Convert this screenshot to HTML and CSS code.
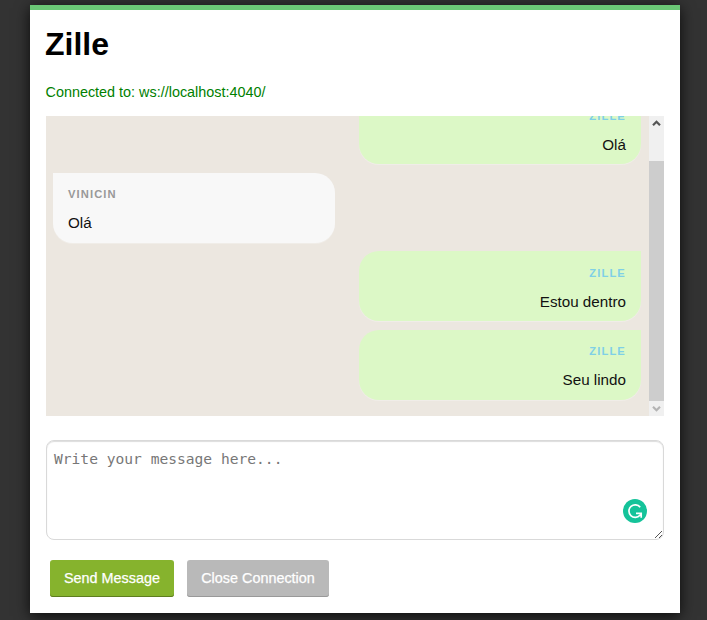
FILE: index.html
```html
<!DOCTYPE html>
<html lang="pt">
<head>
<meta charset="utf-8">
<title>Zille</title>
<link rel="stylesheet" href="styles.css">
</head>
<body>
<main class="page">
  <h1 class="title">Zille</h1>
  <p class="status">Connected to: ws://localhost:4040/</p>
  <section class="chat">
    <ul class="messages">
      <li class="message sent"><span class="author">Zille</span><span class="text">Olá</span></li>
      <li class="message received"><span class="author">Vinicin</span><span class="text">Olá</span></li>
      <li class="message sent"><span class="author">Zille</span><span class="text">Estou dentro</span></li>
      <li class="message sent"><span class="author">Zille</span><span class="text">Seu lindo</span></li>
    </ul>
    <div class="scrollbar">
      <svg class="arrow" width="15" height="15" viewBox="0 0 15 15"><path d="M4 9.2 7.5 5.7 11 9.2" fill="none" stroke="#555" stroke-width="2.2"/></svg>
      <div class="thumb"></div>
      <svg class="arrow" width="15" height="15" viewBox="0 0 15 15"><path d="M4 5.8 7.5 9.3 11 5.8" fill="none" stroke="#b4b4b4" stroke-width="2.2"/></svg>
    </div>
  </section>
  <div class="field">
    <textarea class="input" placeholder="Write your message here..."></textarea>
    <svg class="badge" width="24" height="24" viewBox="0 0 24 24">
      <circle cx="12" cy="12" r="12" fill="#15c39a"/>
      <path d="M17.2 8.2A6.3 6.3 0 1 0 17 16.2L18.2 14.4M13 14.3H18.2V18.8" fill="none" stroke="#fff" stroke-width="1.7"/>
    </svg>
    <svg class="grip" width="9" height="9" viewBox="0 0 9 9"><path d="M1 8 8 1M5 8 8 5" stroke="#555" stroke-width="1"/></svg>
  </div>
  <div class="actions">
    <button class="button send">Send Message</button>
    <button class="button close">Close Connection</button>
  </div>
</main>
</body>
</html>
```
FILE: styles.css
```css
* { box-sizing: border-box; }
body {
  margin: 0;
  height: 620px;
  overflow: hidden;
  padding: 5px 27px 0 30px;
  background: #333;
  font-family: "Liberation Sans", Arial, sans-serif;
}
.page {
  height: 608px;
  padding: 16px 16px 0;
  background: #fff;
  border-top: 5px solid #6bc876;
  box-shadow: 0 3px 14px rgba(0, 0, 0, .8);
}
.title {
  margin: 0 0 0 -1px;
  font-size: 32px;
  line-height: 36px;
}
.status {
  margin: 22px 0 16px -.5px;
  font-size: 14.4px;
  line-height: 16px;
  color: green;
}
.chat {
  display: flex;
  height: 300px;
  overflow: hidden;
  background: #ece7e0;
}
.messages {
  flex: 1;
  display: flex;
  flex-direction: column;
  justify-content: flex-end;
  gap: 8.5px;
  margin: 0;
  padding: 0 7.6px 16.2px 7px;
  list-style: none;
}
.message {
  display: flex;
  flex: none;
  flex-direction: column;
  width: 282px;
  height: 70px;
  padding: 14.3px 15.5px 0 15px;
  box-shadow: 0 1px 0 #f0ede8;
}
.received {
  background: #f8f8f8;
  border-radius: 0 20px 20px 20px;
}
.sent {
  align-self: flex-end;
  align-items: flex-end;
  background: #dcf8c6;
  border-radius: 20px 0 20px 20px;
}
.author {
  font-size: 11.2px;
  font-weight: bold;
  line-height: 14px;
  letter-spacing: 1.1px;
  text-transform: uppercase;
  color: #999;
}
.sent .author { color: #7fd0e6; }
.text {
  margin-top: 13px;
  font-size: 15.2px;
  line-height: 18px;
  color: #111;
}
.scrollbar {
  display: flex;
  flex-direction: column;
  width: 15px;
  background: #f0f0f0;
}
.arrow { display: block; flex: none; }
.thumb {
  height: 240px;
  margin-top: 30px;
  background: #cdcdcd;
}
.field {
  position: relative;
  height: 100px;
  margin-top: 24px;
}
.input {
  display: block;
  width: 100%;
  height: 100%;
  padding: 9px 7px;
  border: 1px solid #d9d9d9;
  border-radius: 8px;
  box-shadow: inset 0 1px 1px #ddd;
  resize: none;
  font: 14.6px/18px "DejaVu Sans Mono", monospace;
}
.input::placeholder { color: #777; }
.badge { position: absolute; right: 17px; bottom: 17px; }
.grip { position: absolute; right: 1px; bottom: 1px; }
.actions {
  display: flex;
  gap: 13px;
  margin: 20px 4px 0;
}
.button {
  height: 37px;
  padding: 0 0 2px;
  border: 0;
  border-radius: 3px;
  font: 14.4px "Liberation Sans", Arial, sans-serif;
  color: #fff;
  -webkit-text-stroke: .25px #fff;
}
.send {
  width: 124px;
  background: #86b32d;
  box-shadow: inset 0 -1px 0 #5d7d1f;
}
.close {
  width: 142px;
  background: #b9b9b9;
  box-shadow: inset 0 -1px 0 #999;
}
```
